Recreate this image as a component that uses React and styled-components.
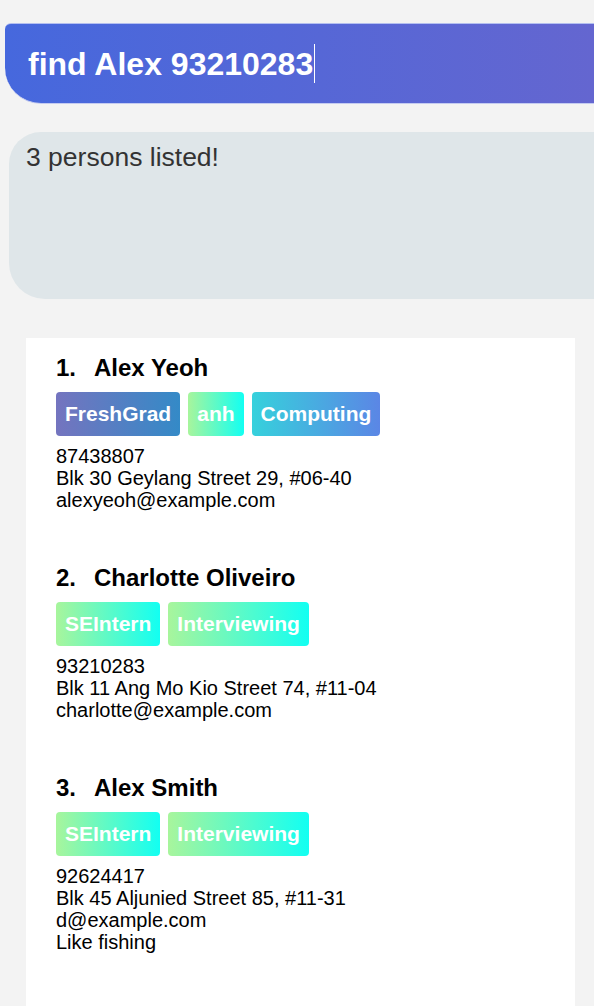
import React from 'react'
import styled, { createGlobalStyle } from 'styled-components'

const persons = [
  {
    name: 'Alex Yeoh',
    tags: [
      { label: 'FreshGrad', kind: 'violet' },
      { label: 'anh', kind: 'mint' },
      { label: 'Computing', kind: 'sky' },
    ],
    lines: ['87438807', 'Blk 30 Geylang Street 29, #06-40', 'alexyeoh@example.com'],
  },
  {
    name: 'Charlotte Oliveiro',
    tags: [
      { label: 'SEIntern', kind: 'mint' },
      { label: 'Interviewing', kind: 'mint' },
    ],
    lines: ['93210283', 'Blk 11 Ang Mo Kio Street 74, #11-04', 'charlotte@example.com'],
  },
  {
    name: 'Alex Smith',
    tags: [
      { label: 'SEIntern', kind: 'mint' },
      { label: 'Interviewing', kind: 'mint' },
    ],
    lines: ['92624417', 'Blk 45 Aljunied Street 85, #11-31', 'd@example.com', 'Like fishing'],
  },
]

const gradients = {
  violet: 'linear-gradient(to right, #7474bf, #348ac7)',
  mint: 'linear-gradient(to right, #a8f59c, #12fff2)',
  sky: 'linear-gradient(to right, #36d1dc, #5b86e5)',
}

export default function App() {
  return (
    <>
      <GlobalStyle />
      <Page>
        <CommandBox>
          <CommandText>find Alex 93210283</CommandText>
          <Caret />
        </CommandBox>
        <ResultBox>3 persons listed!</ResultBox>
        <ListRow>
          <List>
            {persons.map((p, i) => (
              <PersonCard key={p.name} index={i + 1} {...p} />
            ))}
          </List>
        </ListRow>
      </Page>
    </>
  )
}

// components
const PersonCard = ({ index, name, tags, lines }) => (
  <Card>
    <Heading>
      <Index>{index}.</Index>
      <span>{name}</span>
    </Heading>
    <Tags>
      {tags.map((t) => (
        <Tag key={t.label} kind={t.kind}>{t.label}</Tag>
      ))}
    </Tags>
    <Details>
      {lines.map((l) => (
        <div key={l}>{l}</div>
      ))}
    </Details>
  </Card>
)

// style
const GlobalStyle = createGlobalStyle`
  html, body {
    margin: 0;
    padding: 0;
    background: #f3f3f3;
    font-family: "Liberation Sans", Arial, sans-serif;
  }
`

const Page = styled.div`
  width: 594px;
  height: 1006px;
  overflow: hidden;
  background: #f3f3f3;
  padding-top: 23px;
  box-sizing: border-box;
`

const CommandBox = styled.div`
  margin-left: 5px;
  height: 81px;
  box-sizing: border-box;
  display: flex;
  align-items: center;
  padding-left: 23px;
  background: linear-gradient(to right, #4668dd, #6466d0);
  border-top: 1px solid #b4bff0;
  border-bottom: 1px solid #c4cbf0;
  border-radius: 6px 0 0 36px;
`

const CommandText = styled.span`
  color: #ffffff;
  font-size: 32px;
  font-weight: bold;
  line-height: 38px;
`

const Caret = styled.span`
  display: inline-block;
  width: 1px;
  height: 39px;
  margin-left: 1px;
  background: #ffffff;
`

const ResultBox = styled.div`
  margin: 28px 0 0 9px;
  height: 167px;
  box-sizing: border-box;
  padding: 10px 17px;
  background: #dfe6e9;
  border-radius: 32px 0 0 36px;
  color: #333333;
  font-size: 26.5px;
  line-height: 30px;
`

const ListRow = styled.div`
  margin-top: 39px;
  padding: 0 19px 0 26px;
`

const List = styled.div`
  background: #ffffff;
  height: 700px;
`

const Card = styled.div`
  padding: 16px 0 37px 30px;
`

const Heading = styled.div`
  display: flex;
  font-size: 24px;
  font-weight: bold;
  line-height: 28px;
  color: #000000;
`

const Index = styled.span`
  width: 38px;
`

const Tags = styled.div`
  display: flex;
  gap: 8px;
  margin-top: 10px;
`

const Tag = styled.span`
  padding: 10px 9px;
  border-radius: 4px;
  background: ${({ kind }) => gradients[kind]};
  color: #ffffff;
  font-size: 21px;
  font-weight: bold;
  line-height: 24px;
`

const Details = styled.div`
  margin-top: 9px;
  font-size: 20px;
  line-height: 22px;
  color: #000000;
`
